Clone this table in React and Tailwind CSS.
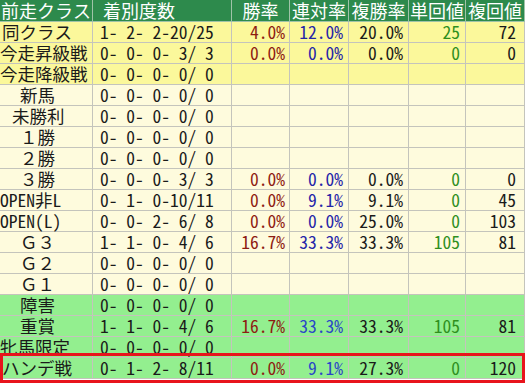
import React from "react";

const rows = [
  { label: "同クラス", pl: "pl-[2px]", bg: "bg-[#fbf89b]", rec: "1- 2- 2-20/25", w: "4.0%", r: "12.0%", p: "20.0%", t: "25", f: "72" },
  { label: "今走昇級戦", pl: "pl-[0px]", bg: "bg-[#fbf89b]", rec: "0- 0- 0- 3/ 3", w: "0.0%", r: "0.0%", p: "0.0%", t: "0", f: "0" },
  { label: "今走降級戦", pl: "pl-[0px]", bg: "bg-[#fbf89b]", rec: "0- 0- 0- 0/ 0" },
  { label: "新馬", pl: "pl-[20px]", bg: "bg-[#fefbdd]", rec: "0- 0- 0- 0/ 0" },
  { label: "未勝利", pl: "pl-[12px]", bg: "bg-[#fefbdd]", rec: "0- 0- 0- 0/ 0" },
  { label: "１勝", pl: "pl-[20px]", bg: "bg-[#fefbdd]", rec: "0- 0- 0- 0/ 0" },
  { label: "２勝", pl: "pl-[20px]", bg: "bg-[#fefbdd]", rec: "0- 0- 0- 0/ 0" },
  { label: "３勝", pl: "pl-[20px]", bg: "bg-[#fefbdd]", rec: "0- 0- 0- 3/ 3", w: "0.0%", r: "0.0%", p: "0.0%", t: "0", f: "0" },
  { label: "OPEN非L", pl: "pl-[0px]", bg: "bg-[#fefbdd]", rec: "0- 1- 0-10/11", w: "0.0%", r: "9.1%", p: "9.1%", t: "0", f: "45" },
  { label: "OPEN(L)", pl: "pl-[0px]", bg: "bg-[#fefbdd]", rec: "0- 0- 2- 6/ 8", w: "0.0%", r: "0.0%", p: "25.0%", t: "0", f: "103" },
  { label: "Ｇ３", pl: "pl-[20px]", bg: "bg-[#fefbdd]", rec: "1- 1- 0- 4/ 6", w: "16.7%", r: "33.3%", p: "33.3%", t: "105", f: "81" },
  { label: "Ｇ２", pl: "pl-[20px]", bg: "bg-[#fefbdd]", rec: "0- 0- 0- 0/ 0" },
  { label: "Ｇ１", pl: "pl-[20px]", bg: "bg-[#fefbdd]", rec: "0- 0- 0- 0/ 0" },
  { label: "障害", pl: "pl-[20px]", bg: "bg-[#93ef8f]", rec: "0- 0- 0- 0/ 0", green: true },
  { label: "重賞", pl: "pl-[20px]", bg: "bg-[#93ef8f]", rec: "1- 1- 0- 4/ 6", w: "16.7%", r: "33.3%", p: "33.3%", t: "105", f: "81", green: true },
  { label: "牝馬限定", pl: "pl-[0px]", bg: "bg-[#93ef8f]", rec: "0- 0- 0- 0/ 0", green: true },
  { label: "ハンデ戦", pl: "pl-[2px]", bg: "bg-[#93ef8f]", rec: "0- 1- 2- 8/11", w: "0.0%", r: "9.1%", p: "27.3%", t: "0", f: "120", green: true },
];

const headers = [
  { t: "前走クラス", cls: "justify-start pl-[1px]" },
  { t: "着別度数", cls: "justify-start pl-[10px]" },
  { t: "勝率", cls: "justify-center" },
  { t: "連対率", cls: "justify-center" },
  { t: "複勝率", cls: "justify-center" },
  { t: "単回値", cls: "justify-center" },
  { t: "複回値", cls: "justify-center" },
];

const cell = "h-[21px] border-r border-b border-[#c4c4bc] flex items-center whitespace-pre leading-[20px]";

export default function App() {
  return (
    <div className="relative w-[525px] h-[383px] overflow-hidden bg-white font-['Noto_Sans_Mono_CJK_JP','Noto_Sans_CJK_JP',monospace] font-light text-[17.5px] text-[#1a1a1a]">
      <div className="grid grid-cols-[93px_139px_58px_59px_60px_57px_59px]">
        {headers.map((h, i) => (
          <div
            key={i}
            className={`h-[22px] border-r border-b border-[#9fc3a8] bg-[#2d8a4c] text-white flex items-center whitespace-pre text-[18px] leading-[21px] ${h.cls}`}
          >
            {h.t}
          </div>
        ))}
        {rows.map((r, i) => (
          <React.Fragment key={i}>
            <div className={`${cell} ${r.bg} ${r.pl}`}>{r.label}</div>
            <div className={`${cell} ${r.bg} pl-[7px]`}>{r.rec}</div>
            <div className={`${cell} ${r.bg} justify-end pr-[4px] text-[#8e1c12]`}>{r.w || ""}</div>
            <div className={`${cell} ${r.bg} justify-end pr-[5px] ${r.green ? "text-[#2a46c8]" : "text-[#2424a8]"}`}>{r.r || ""}</div>
            <div className={`${cell} ${r.bg} justify-end pr-[5px] text-[#1a1a1a]`}>{r.p || ""}</div>
            <div className={`${cell} ${r.bg} justify-end pr-[5px] text-[#2f8f1e]`}>{r.t || ""}</div>
            <div className={`${cell} ${r.bg} justify-end pr-[8px] text-[#1a1a1a]`}>{r.f || ""}</div>
          </React.Fragment>
        ))}
      </div>
      <div className="absolute left-0 top-[353px] w-[525px] h-[30px] border-[3px] border-[#e8141c] pointer-events-none" />
    </div>
  );
}
